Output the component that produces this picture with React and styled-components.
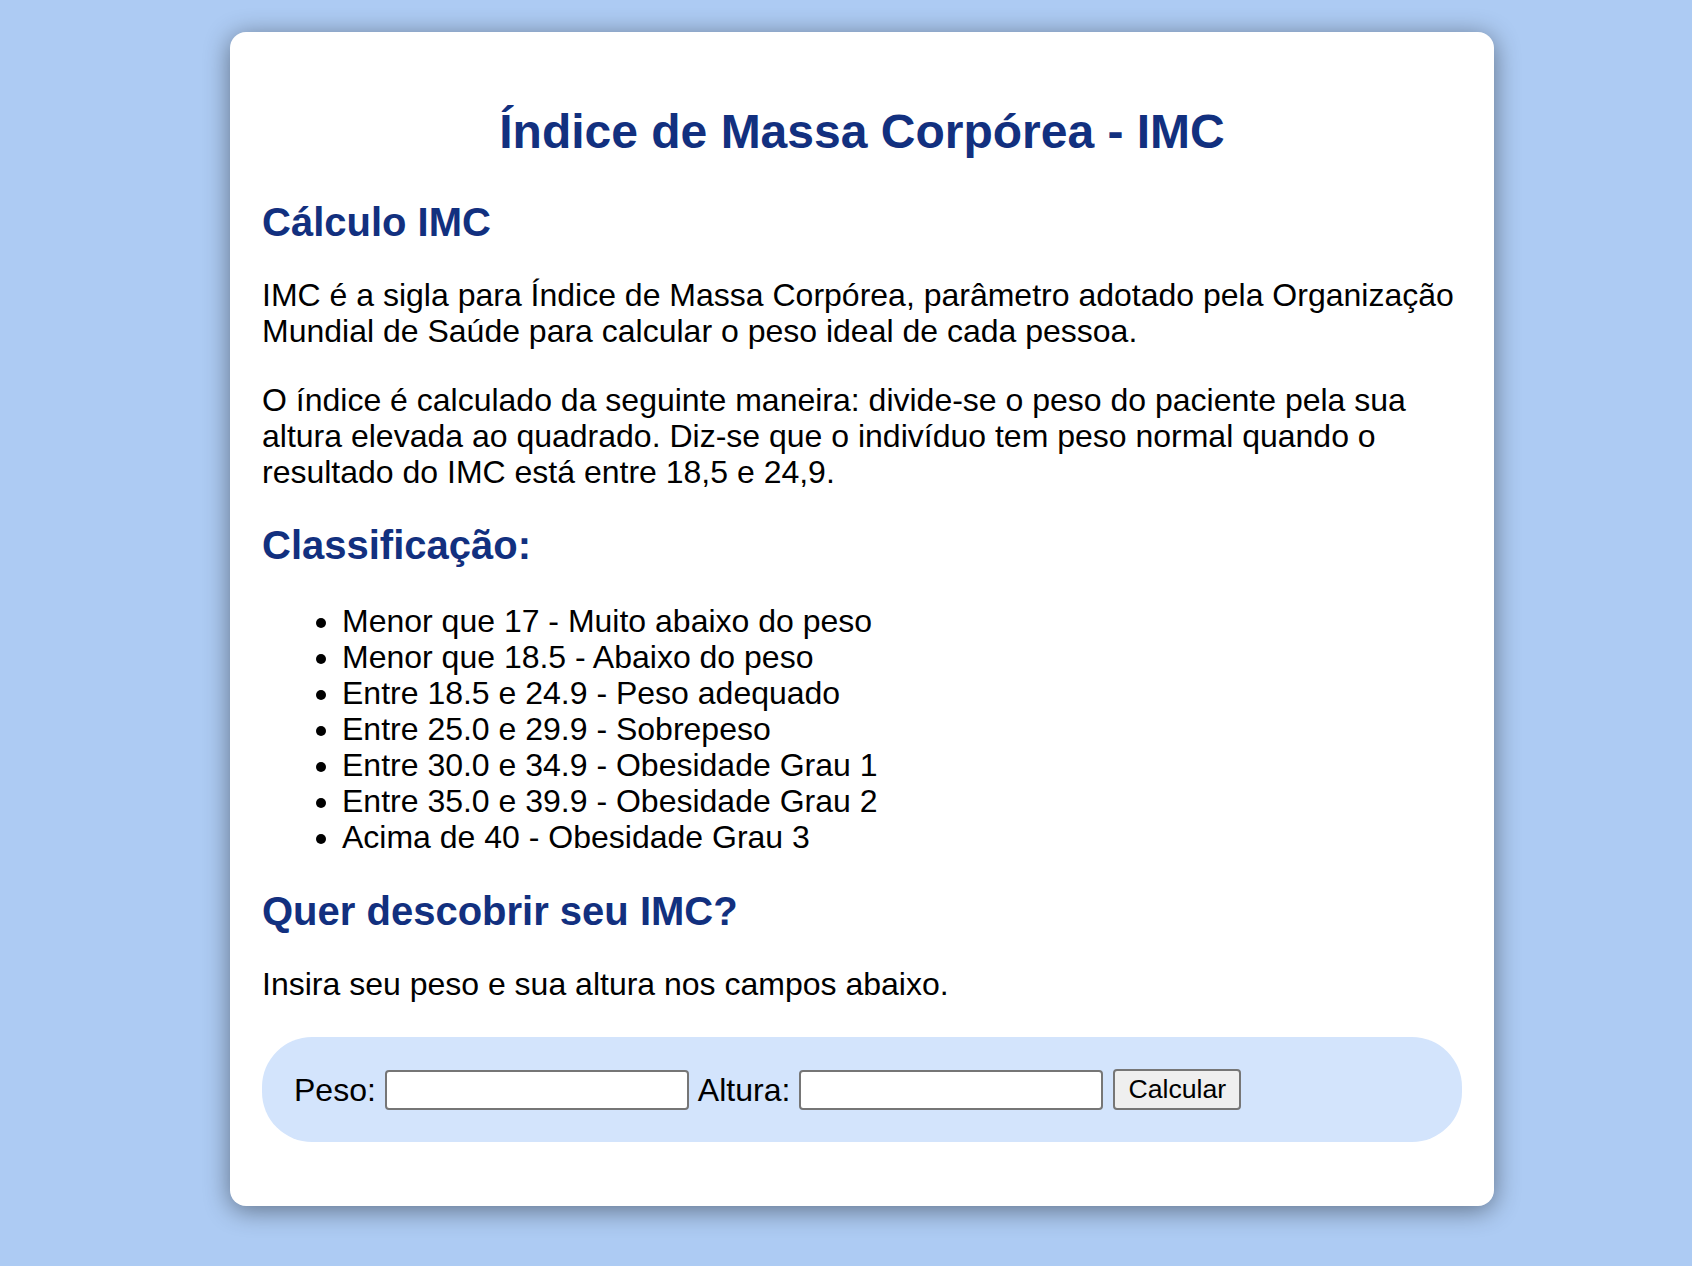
import React from 'react';
import styled, { createGlobalStyle } from 'styled-components';

const GlobalStyle = createGlobalStyle`
  body {
    margin: 0;
    background-color: #adcbf3;
    font-family: "Liberation Sans", Arial, Helvetica, sans-serif;
    color: #000;
  }
`;

const Pagina = styled.div`
  display: flex;
  justify-content: center;
  align-items: flex-start;
  padding: 32px 0 32px 32px;
  min-height: 100vh;
  box-sizing: border-box;
`;

const Cartao = styled.main`
  box-sizing: border-box;
  width: 1264px;
  padding: 40px 32px 64px;
  background-color: #fff;
  border-radius: 16px;
  box-shadow: 0 4px 26px rgba(0, 0, 0, 0.45);
`;

const Titulo = styled.h1`
  margin: 32px 0 41px;
  font-size: 48px;
  font-weight: bold;
  text-align: center;
  color: #12307f;
`;

const Subtitulo = styled.h2`
  margin: 0 0 32px;
  font-size: 40px;
  font-weight: bold;
  color: #12307f;
`;

const Paragrafo = styled.p`
  margin: 0 0 33px;
  font-size: 32px;
  line-height: 36px;
`;

const Lista = styled.ul`
  margin: 0 0 34px;
  padding: 3px 0 0 80px;
  font-size: 32px;
  line-height: 36px;
`;

const Formulario = styled.form`
  display: flex;
  align-items: center;
  gap: 9px;
  margin-top: 35px;
  padding: 32px;
  background-color: #d3e4fc;
  border-radius: 50px;
`;

const Rotulo = styled.label`
  font-size: 32px;
  line-height: 36px;
`;

const Campo = styled.input`
  box-sizing: border-box;
  width: 304px;
  height: 40px;
  padding: 2px 4px;
  border: 2px solid #767676;
  border-radius: 4px;
  background: #fff;
  font-family: inherit;
  font-size: 26px;
`;

const Botao = styled.button`
  box-sizing: border-box;
  width: 128px;
  height: 41px;
  margin-left: 1px;
  padding: 0 12px;
  border: 2px solid #767676;
  border-radius: 4px;
  background-color: #efefef;
  color: #000;
  font-family: inherit;
  font-size: 26.67px;
`;

const classificacoes = [
  'Menor que 17 - Muito abaixo do peso',
  'Menor que 18.5 - Abaixo do peso',
  'Entre 18.5 e 24.9 - Peso adequado',
  'Entre 25.0 e 29.9 - Sobrepeso',
  'Entre 30.0 e 34.9 - Obesidade Grau 1',
  'Entre 35.0 e 39.9 - Obesidade Grau 2',
  'Acima de 40 - Obesidade Grau 3',
];

const App = () => {
  return (
    <>
      <GlobalStyle />
      <Pagina>
        <Cartao>
          <Titulo>Índice de Massa Corpórea - IMC</Titulo>
          <Subtitulo>Cálculo IMC</Subtitulo>
          <Paragrafo>
            IMC é a sigla para Índice de Massa Corpórea, parâmetro adotado pela Organização
            Mundial de Saúde para calcular o peso ideal de cada pessoa.
          </Paragrafo>
          <Paragrafo>
            O índice é calculado da seguinte maneira: divide-se o peso do paciente pela sua
            altura elevada ao quadrado. Diz-se que o indivíduo tem peso normal quando o
            resultado do IMC está entre 18,5 e 24,9.
          </Paragrafo>
          <Subtitulo>Classificação:</Subtitulo>
          <Lista>
            {classificacoes.map((item) => (
              <li key={item}>{item}</li>
            ))}
          </Lista>
          <Subtitulo>Quer descobrir seu IMC?</Subtitulo>
          <Paragrafo>Insira seu peso e sua altura nos campos abaixo.</Paragrafo>
          <Formulario onSubmit={(e) => e.preventDefault()}>
            <Rotulo htmlFor="peso">Peso:</Rotulo>
            <Campo id="peso" type="text" />
            <Rotulo htmlFor="altura">Altura:</Rotulo>
            <Campo id="altura" type="text" />
            <Botao type="submit">Calcular</Botao>
          </Formulario>
        </Cartao>
      </Pagina>
    </>
  );
};

export default App;
